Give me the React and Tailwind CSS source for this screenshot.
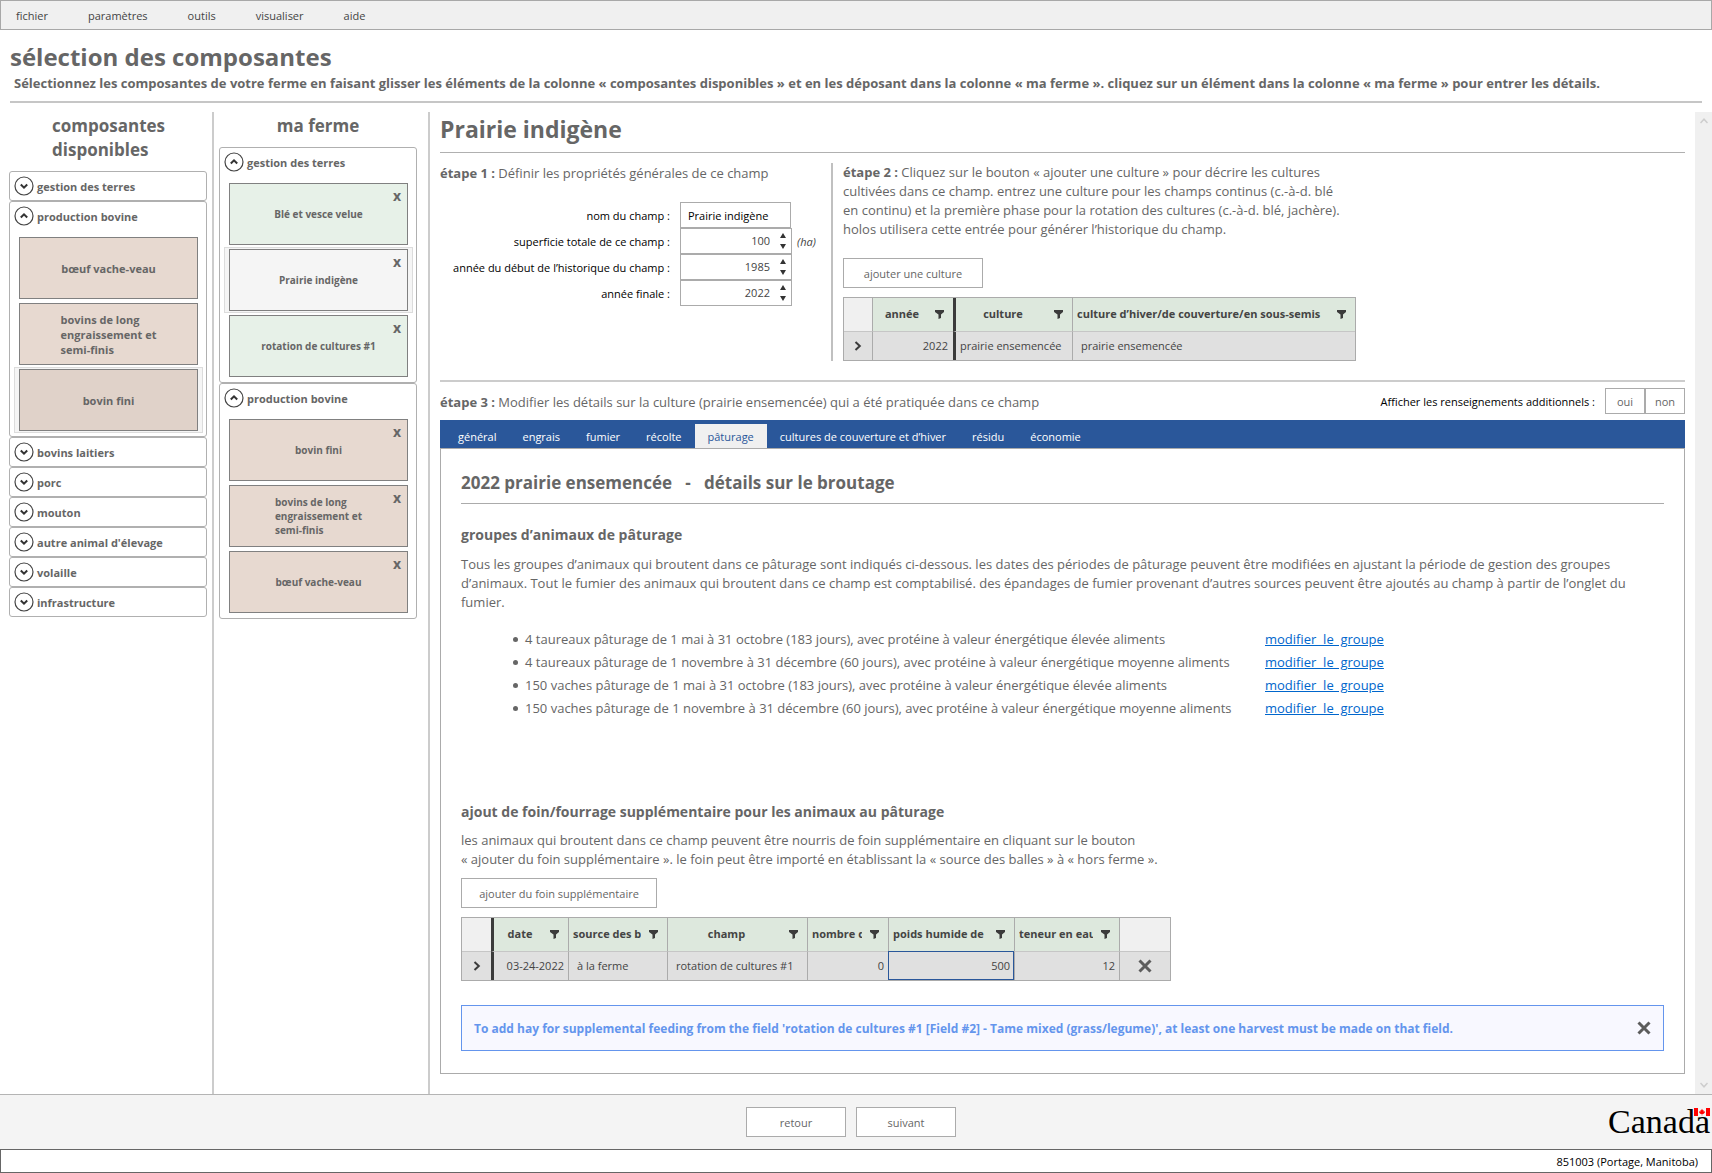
import React, { useState } from "react";

function ExpandIcon({ open }) {
  return (
    <svg width="20" height="20" viewBox="0 0 20 20" fill="none" className="shrink-0" aria-hidden="true">
      <circle cx="10" cy="10" r="9" stroke="#444" strokeWidth="1.2" />
      <path d={open ? "M6.8 11.5 10 8.3l3.2 3.2" : "M6.8 8.5 10 11.7l3.2-3.2"} stroke="#333" strokeWidth="2" />
    </svg>
  );
}

function FilterIcon() {
  return (
    <svg width="9" height="9" viewBox="0 0 9 9" className="shrink-0" aria-hidden="true">
      <path d="M0 0h9v2L6 4.500v3.500L3.500 9V4.500L0 2z" fill="#3b3b3b" />
    </svg>
  );
}

function CrossIcon() {
  return (
    <svg width="14" height="14" viewBox="0 0 14 14" className="block" aria-hidden="true">
      <path d="M1.500 1.500 12.500 12.500M12.500 1.500 1.500 12.500" stroke="#5c5c5c" strokeWidth="3" />
    </svg>
  );
}

function RowMarker() {
  return (
    <svg width="8" height="10" viewBox="0 0 8 10" fill="none" className="mx-auto" aria-hidden="true">
      <path d="M1.500 1 5.800 5 1.500 9" stroke="#3b3b3b" strokeWidth="2" />
    </svg>
  );
}

function Section({ title, children }) {
  const open = Boolean(children);
  return (
    <section className="rounded-[3px] border border-[#b0b0b0]">
      <button type="button" aria-expanded={open} className="flex h-7 w-full items-center gap-[3px] pl-1 text-left text-[11px] font-bold">
        <ExpandIcon open={open} />
        <span className="pt-0.5">{title}</span>
      </button>
      {open && <div className="flex flex-col pt-[5px] pb-[3px]">{children}</div>}
    </section>
  );
}

function Card({ label, tone, selected, removable }) {
  const tones = { green: "bg-[#e7f1e8]", beige: "bg-[#e7d9d0]", grey: "bg-[#f5f5f5]", dark: "bg-[#e0d2c9]" };
  return (
    <div className={"ml-1 mr-[3px] border px-1 py-px " + (selected ? "border-[#dcdcdc] bg-[#f5f5f5]" : "border-transparent")}>
      <div className={"relative flex h-[62px] items-center justify-center border border-[#808080] " + tones[tone]}>
        <button type="button" className={"text-left font-bold whitespace-pre-line " + (removable ? "text-[10px] leading-[14px]" : "text-[11px] leading-[15px]")}>
          {label}
        </button>
        {removable && (
          <button type="button" aria-label="retirer" className="absolute top-1 right-[6px] text-[14px] leading-4 font-bold">
            x
          </button>
        )}
      </div>
    </div>
  );
}

function NumberField({ id, value }) {
  const [n, setN] = useState(value);
  return (
    <div className="flex h-[26px] w-[112px] border border-[#ababab]">
      <input
        id={id}
        type="number"
        value={n}
        onChange={(e) => setN(Number(e.target.value))}
        className="w-[89px] min-w-0 appearance-none text-right text-[11px] text-[#444] outline-none [-moz-appearance:textfield] [&::-webkit-inner-spin-button]:appearance-none"
      />
      <div className="flex flex-1 flex-col items-center justify-between py-1 pl-1">
        <button type="button" aria-label="augmenter" onClick={() => setN(n + 1)}>
          <svg width="6" height="5" viewBox="0 0 6 5" className="block"><path d="M0 5 3 0 6 5z" fill="#333" /></svg>
        </button>
        <button type="button" aria-label="diminuer" onClick={() => setN(n - 1)}>
          <svg width="6" height="5" viewBox="0 0 6 5" className="block"><path d="M0 0 3 5 6 0z" fill="#333" /></svg>
        </button>
      </div>
    </div>
  );
}

function Head({ children, thick, left }) {
  return (
    <th scope="col" className={"h-[33px] bg-[#dde8dd] pr-[9px] pl-1 " + (thick ? "border-l-[3px] border-l-[#3b3b3b]" : "border-l border-l-[#ababab]")}>
      <div className="flex items-center justify-between gap-2">
        <span className={"min-w-0 flex-1 overflow-hidden whitespace-nowrap " + (left ? "text-left" : "text-center")}>{children}</span>
        <FilterIcon />
      </div>
    </th>
  );
}

const groups = [
  "4 taureaux pâturage de 1 mai à 31 octobre (183 jours), avec protéine à valeur énergétique élevée aliments",
  "4 taureaux pâturage de 1 novembre à 31 décembre (60 jours), avec protéine à valeur énergétique moyenne aliments",
  "150 vaches pâturage de 1 mai à 31 octobre (183 jours), avec protéine à valeur énergétique élevée aliments",
  "150 vaches pâturage de 1 novembre à 31 décembre (60 jours), avec protéine à valeur énergétique moyenne aliments",
];

const tabs = ["général", "engrais", "fumier", "récolte", "pâturage", "cultures de couverture et d’hiver", "résidu", "économie"];

const longKeep = "bovins de long\nengraissement et\nsemi-finis";

export default function App() {
  const [tab, setTab] = useState("pâturage");
  return (
    <div className="flex min-h-screen flex-col bg-white font-['Open_Sans','Noto_Sans',sans-serif] text-[13px] text-[#666]">
      <nav className="flex h-[30px] items-center gap-10 border border-[#a8a8a8] bg-[#f0f0f0] px-[15px] pt-0.5 text-[11px] text-[#444]">
        {["fichier", "paramètres", "outils", "visualiser", "aide"].map((m) => (
          <button key={m} type="button">{m}</button>
        ))}
      </nav>

      <header className="mx-[10px] border-b-2 border-[#c6c6c6] pt-[11px] pb-[9px]">
        <h1 className="text-[24px] leading-8 font-bold">sélection des composantes</h1>
        <p className="pt-px pl-1 text-[13px] leading-[18px] font-bold">
          Sélectionnez les composantes de votre ferme en faisant glisser les éléments de la colonne « composantes disponibles » et en les déposant dans la colonne « ma ferme ». cliquez sur un élément dans la colonne « ma ferme » pour entrer les détails.
        </p>
      </header>

      <div className="mt-[9px] flex flex-1">
        <aside className="w-[214px] shrink-0 border-r-2 border-[#ccc] pr-[5px] pl-[9px]">
          <h2 className="mx-auto mb-[9px] w-[112px] pt-0.5 text-[17px] leading-6 font-bold">composantes disponibles</h2>
          <Section title="gestion des terres" />
          <Section title="production bovine">
            <Card label="bœuf vache-veau" tone="beige" />
            <Card label={longKeep} tone="beige" />
            <Card label="bovin fini" tone="dark" selected />
          </Section>
          <Section title="bovins laitiers" />
          <Section title="porc" />
          <Section title="mouton" />
          <Section title="autre animal d'élevage" />
          <Section title="volaille" />
          <Section title="infrastructure" />
        </aside>

        <aside className="w-[216px] shrink-0 border-r-2 border-[#ccc] pr-[11px] pl-[5px]">
          <h2 className="mb-[9px] pt-0.5 text-center text-[17px] leading-6 font-bold">ma ferme</h2>
          <Section title="gestion des terres">
            <Card label="Blé et vesce velue" tone="green" removable />
            <Card label="Prairie indigène" tone="grey" selected removable />
            <Card label="rotation de cultures #1" tone="green" removable />
          </Section>
          <Section title="production bovine">
            <Card label="bovin fini" tone="beige" removable />
            <Card label={longKeep} tone="beige" removable />
            <Card label="bœuf vache-veau" tone="beige" removable />
          </Section>
        </aside>

        <main className="flex min-w-0 flex-1 flex-col pr-[10px] pb-5 pl-[10px]">
          <h2 className="border-b border-[#b0b0b0] pt-px pb-[7px] text-[23px] leading-8 font-bold">Prairie indigène</h2>

          <div className="flex pt-[10px] pb-[19px]">
            <section className="w-[393px] shrink-0 border-r-2 border-[#c0c0c0]">
              <p className="leading-5"><b>étape 1 :</b> Définir les propriétés générales de ce champ</p>
              <form className="mt-[19px] grid grid-cols-[230px_111px_auto] items-center text-[11px] text-black">
                <label htmlFor="nom" className="pt-0.5 text-right whitespace-nowrap">nom du champ :</label>
                <div className="col-span-2 pl-[10px]">
                  <input id="nom" defaultValue="Prairie indigène" className="block h-[26px] w-[111px] border border-[#ababab] px-[7px] outline-none" />
                </div>
                <label htmlFor="aire" className="pt-0.5 text-right whitespace-nowrap">superficie totale de ce champ :</label>
                <div className="col-span-2 flex items-center gap-[5px] pl-[10px]"><NumberField id="aire" value={100} /><i className="pt-0.5 text-[#444]">(ha)</i></div>
                <label htmlFor="debut" className="pt-0.5 text-right whitespace-nowrap">année du début de l’historique du champ :</label>
                <div className="col-span-2 pl-[10px]"><NumberField id="debut" value={1985} /></div>
                <label htmlFor="fin" className="pt-0.5 text-right whitespace-nowrap">année finale :</label>
                <div className="col-span-2 pl-[10px]"><NumberField id="fin" value={2022} /></div>
              </form>
            </section>

            <section className="pl-[10px]">
              <p className="w-[506px] leading-[19px]">
                <b>étape 2 :</b> Cliquez sur le bouton « ajouter une culture » pour décrire les cultures cultivées dans ce champ. entrez une culture pour les champs continus (c.-à-d. blé en continu) et la première phase pour la rotation des cultures (c.-à-d. blé, jachère). holos utilisera cette entrée pour générer l’historique du champ.
              </p>
              <button type="button" className="mt-[19px] mb-[9px] block h-[30px] w-[140px] border border-[#ababab] pt-0.5 text-[11px]">ajouter une culture</button>
              <table className="w-[513px] table-fixed border-separate border-spacing-0 border border-[#ababab] text-[11px] text-[#444]">
                <colgroup>
                  <col className="w-[28px]" /><col className="w-[81px]" /><col className="w-[119px]" /><col />
                </colgroup>
                <thead>
                  <tr>
                    <td className="bg-[#f0f0f0]" />
                    <Head>année</Head>
                    <Head thick>culture</Head>
                    <Head left>culture d’hiver/de couverture/en sous-semis</Head>
                  </tr>
                </thead>
                <tbody>
                  <tr className="h-[29px] bg-[#e0e0e0] [&>td]:border-t [&>td]:border-t-[#c6c6c6]">
                    <td><RowMarker /></td>
                    <td className="border-l border-l-[#ababab] pr-[5px] text-right">2022</td>
                    <td className="border-l-[3px] border-l-[#3b3b3b] pl-1 whitespace-nowrap">prairie ensemencée</td>
                    <td className="border-l border-l-[#ababab] pl-2">prairie ensemencée</td>
                  </tr>
                </tbody>
              </table>
            </section>
          </div>

          <div className="flex items-center border-t-2 border-[#ccc] pt-[6px] pb-[6px]">
            <p className="flex-1 pt-[3px]"><b>étape 3 :</b> Modifier les détails sur la culture (prairie ensemencée) qui a été pratiquée dans ce champ</p>
            <span className="mr-[10px] pt-0.5 text-[11px] text-black">Afficher les renseignements additionnels :</span>
            <button type="button" className="h-[26px] w-10 border border-[#ababab] pt-0.5 text-[11px]">oui</button>
            <button type="button" className="h-[26px] w-10 border border-[#ababab] pt-0.5 text-[11px]">non</button>
          </div>

          <div role="tablist" className="flex h-7 items-end bg-[#2a579a] pl-[5px] text-[11px]">
            {tabs.map((t) => (
              <button
                key={t}
                type="button"
                role="tab"
                aria-selected={t === tab}
                onClick={() => setTab(t)}
                className={"h-6 px-[13px] pt-0.5 " + (t === tab ? "bg-[#f0f0f0] text-[#2a579a]" : "text-white")}
              >
                {t}
              </button>
            ))}
          </div>

          <div role="tabpanel" className="flex-1 border border-[#ababab] px-5 pb-[22px]">
            <h3 className="border-b border-[#ababab] pt-[22px] pb-[8px] text-[17px] leading-6 font-bold whitespace-pre">{"2022 prairie ensemencée   -   détails sur le broutage"}</h3>
            <h4 className="pt-[21px] text-[14px] leading-5 font-bold">groupes d’animaux de pâturage</h4>
            <p className="mt-[10px] leading-[19px]">
              Tous les groupes d’animaux qui broutent dans ce pâturage sont indiqués ci-dessous. les dates des périodes de pâturage peuvent être modifiées en ajustant la période de gestion des groupes d’animaux. Tout le fumier des animaux qui broutent dans ce champ est comptabilisé. des épandages de fumier provenant d’autres sources peuvent être ajoutés au champ à partir de l’onglet du fumier.
            </p>
            <ul className="mt-4 ml-[52px]">
              {groups.map((g) => (
                <li key={g} className="flex h-[23px] items-center">
                  <span className="mr-[7px] size-[5px] rounded-full bg-[#666]" />
                  <span className="w-[740px]">{g}</span>
                  <a href="#groupe" className="whitespace-pre text-[#0066cc] underline">{"modifier  le  groupe"}</a>
                </li>
              ))}
            </ul>

            <h4 className="mt-[82px] text-[14px] leading-5 font-bold">ajout de foin/fourrage supplémentaire pour les animaux au pâturage</h4>
            <p className="mt-[9px] leading-[19px]">
              les animaux qui broutent dans ce champ peuvent être nourris de foin supplémentaire en cliquant sur le bouton<br />
              « ajouter du foin supplémentaire ». le foin peut être importé en établissant la « source des balles » à « hors ferme ».
            </p>
            <button type="button" className="mt-[9px] mb-[9px] block h-[30px] w-[196px] border border-[#ababab] pt-0.5 text-[11px]">ajouter du foin supplémentaire</button>
            <table className="w-[710px] table-fixed border-separate border-spacing-0 border border-[#ababab] text-[11px] text-[#444]">
              <colgroup>
                <col className="w-[29px]" /><col className="w-[77px]" /><col className="w-[99px]" /><col className="w-[140px]" />
                <col className="w-[81px]" /><col className="w-[126px]" /><col className="w-[105px]" /><col />
              </colgroup>
              <thead>
                <tr>
                  <td className="bg-[#f0f0f0]" />
                  <Head thick>date</Head>
                  <Head left>source des balles</Head>
                  <Head>champ</Head>
                  <Head left>nombre de balles</Head>
                  <Head left>poids humide de</Head>
                  <Head left>teneur en eau</Head>
                  <td className="border-l border-l-[#ababab] bg-[#f0f0f0]" />
                </tr>
              </thead>
              <tbody>
                <tr className="h-[29px] bg-[#e0e0e0] [&>td]:border-t [&>td]:border-t-[#c6c6c6]">
                  <td><RowMarker /></td>
                  <td className="border-l-[3px] border-l-[#3b3b3b] pr-1 text-right whitespace-nowrap">03-24-2022</td>
                  <td className="border-l border-l-[#ababab] pl-2">à la ferme</td>
                  <td className="border-l border-l-[#ababab] pl-2 whitespace-nowrap">rotation de cultures #1</td>
                  <td className="border-l border-l-[#ababab] pr-1 text-right">0</td>
                  <td className="border-l border-l-[#ababab] pr-1 text-right outline outline-offset-[-1px] outline-[#2a579a]">500</td>
                  <td className="border-l border-l-[#ababab] pr-1 text-right">12</td>
                  <td className="border-l border-l-[#ababab] text-center">
                    <button type="button" aria-label="supprimer" className="block w-full [&>svg]:mx-auto"><CrossIcon /></button>
                  </td>
                </tr>
              </tbody>
            </table>

            <div className="mt-6 flex h-[46px] items-center justify-between border border-[#6495ed] bg-[#f8f8ff] px-3 text-[12px] font-bold text-[#6495ed]">
              <span className="pt-0.5">To add hay for supplemental feeding from the field 'rotation de cultures #1 [Field #2] - Tame mixed (grass/legume)', at least one harvest must be made on that field.</span>
              <button type="button" aria-label="fermer"><CrossIcon /></button>
            </div>
          </div>
        </main>

        <div className="flex w-[17px] shrink-0 flex-col items-center justify-between bg-[#f0f0f0] py-[6px]">
          <svg width="8" height="6" viewBox="0 0 8 6" fill="none"><path d="M0.500 5 4 1.200 7.500 5" stroke="#cdcdcd" strokeWidth="1.500" /></svg>
          <svg width="8" height="6" viewBox="0 0 8 6" fill="none"><path d="M0.500 1 4 4.800 7.500 1" stroke="#cdcdcd" strokeWidth="1.500" /></svg>
        </div>
      </div>

      <footer>
        <div className="grid h-[55px] grid-cols-[1fr_auto_1fr] items-center border-t border-[#b4b4b4] bg-[#f4f4f4]">
          <span />
          <div className="flex gap-[10px] pr-[10px]">
            <button type="button" className="h-[30px] w-[100px] border border-[#ababab] bg-white pt-0.5 text-[11px]">retour</button>
            <button type="button" className="h-[30px] w-[100px] border border-[#ababab] bg-white pt-0.5 text-[11px]">suivant</button>
          </div>
          <div className="relative justify-self-end pr-[2px] font-['Liberation_Serif',serif] text-[34px] leading-[40px] text-black">
            Canada
            <svg width="16" height="8" viewBox="0 0 16 8" className="absolute top-[6px] right-[2px]" aria-hidden="true">
              <path d="M0 0h4v8H0zM12 0h4v8h-4z" fill="#f00" />
              <path d="M4 0h8v8H4z" fill="#f4f4f4" />
              <path d="M8 0.800 8.800 2.300 9.600 2 9.400 3.500 10.800 2.900 10.500 4 11 4.400 9.300 5.900 8.300 5.900V7.400H7.700V5.900L6.700 5.900 5 4.400 5.500 4 5.200 2.900 6.600 3.500 6.400 2 7.200 2.300z" fill="#f00" />
            </svg>
          </div>
        </div>
        <p className="flex h-6 items-center justify-end border border-[#666] bg-white pt-0.5 pr-[13px] text-[11px] text-black">851003 (Portage, Manitoba)</p>
      </footer>
    </div>
  );
}
